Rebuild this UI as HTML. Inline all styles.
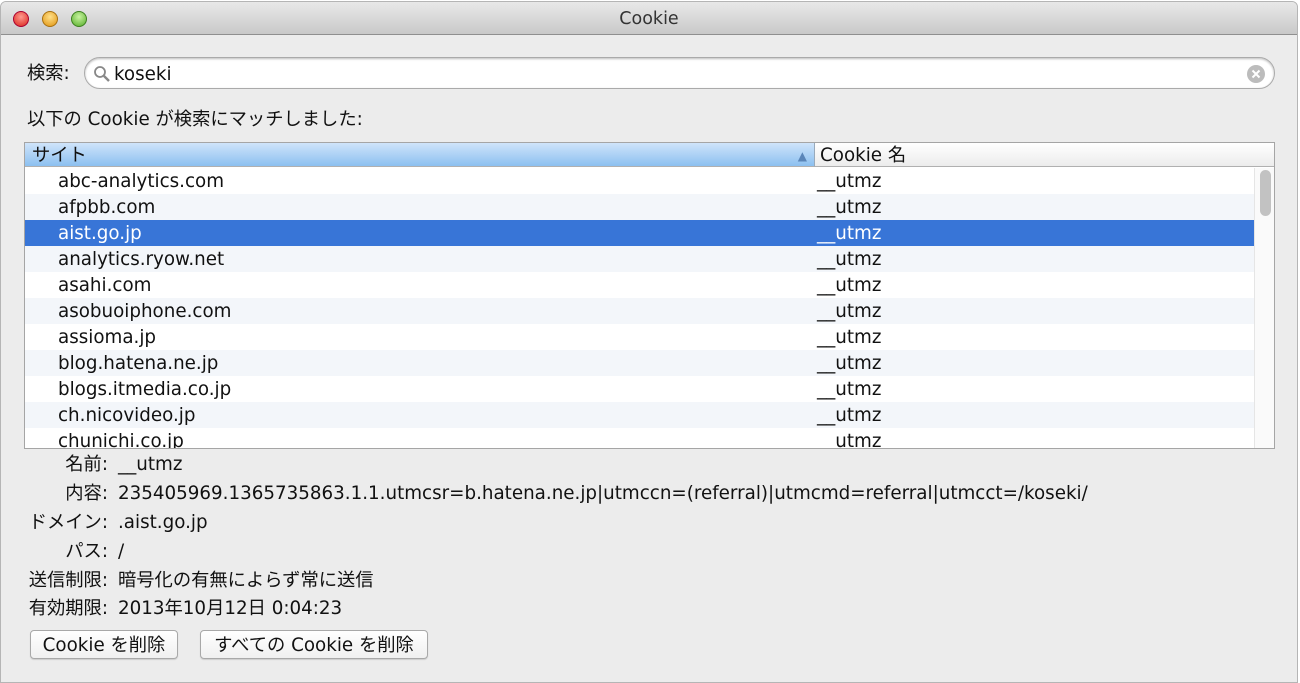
<!DOCTYPE html>
<html><head><meta charset="utf-8"><style>
*{margin:0;padding:0;box-sizing:border-box}
body{width:1300px;height:683px;background:#fff;font-family:"DejaVu Sans","Noto Sans CJK JP",sans-serif;font-size:18.3px;line-height:22px;color:#111;position:relative;overflow:hidden}
.win{position:absolute;left:0;top:1px;width:1298px;height:682px;background:#ececec;border:1px solid #b5b5b5;border-radius:6px 6px 0 0;overflow:hidden}
.tb{position:absolute;left:0;top:0;right:0;height:33px;background:linear-gradient(#e8e8e8,#c9c9c9);border-bottom:1px solid #8f8f8f;text-align:center;line-height:35px;font-size:17.5px;color:#333}
.dot{position:absolute;top:9px;width:16px;height:16px;border-radius:50%}
.a{position:absolute;white-space:nowrap}
.search{position:absolute;left:84px;top:57px;width:1191px;height:32px;background:#fff;border:1px solid #aaa;border-radius:16px;box-shadow:inset 0 1px 2px #bbb}
.table{position:absolute;left:24px;top:142px;width:1251px;height:307px;background:#fff;border:1px solid #a5a5a5;overflow:hidden}
.hd{position:absolute;top:0;height:24px;line-height:26px;border-bottom:1px solid #b0b0b0}
.row{position:absolute;left:0;width:1229px;height:26px;line-height:28px}
.row span{position:absolute}
.btn{position:absolute;top:630px;height:29px;background:linear-gradient(#fff,#f0f0f0);border:1px solid #a8a8a8;border-radius:4px;line-height:29px;text-align:center;box-shadow:0 1px 1px #ccc}
</style></head><body>
<div class="win">
<div class="tb">Cookie
<div class="dot" style="left:12px;background:radial-gradient(circle at 50% 35%,#ff9a90,#d9241a);border:1px solid #a03"></div>
<div class="dot" style="left:41px;background:radial-gradient(circle at 50% 35%,#ffe08a,#e0940f);border:1px solid #a87010"></div>
<div class="dot" style="left:70px;background:radial-gradient(circle at 50% 35%,#c8f3a0,#55ad28);border:1px solid #3d8020"></div>
</div>
</div>
<div class="a" style="left:27px;top:63px">検索:</div>
<div class="search">
<svg style="position:absolute;left:8px;top:7px" width="18" height="18"><circle cx="7" cy="7" r="5" fill="none" stroke="#888" stroke-width="1.8"/><line x1="11" y1="11" x2="16" y2="16" stroke="#888" stroke-width="2.4"/></svg>
<div class="a" style="left:29px;top:6px">koseki</div>
<svg style="position:absolute;right:8px;top:6px" width="20" height="20"><circle cx="10" cy="10" r="9" fill="#bcbcbc"/><path d="M6.5 6.5L13.5 13.5M13.5 6.5L6.5 13.5" stroke="#fff" stroke-width="2"/></svg>
</div>
<div class="a" style="left:27px;top:109px">以下の Cookie が検索にマッチしました:</div>
<div class="table">
<div class="hd" style="left:0;width:790px;background:linear-gradient(#cfe4fa,#8cc0f0);border-right:1px solid #9ab"><span style="position:absolute;left:7px">サイト</span><span style="position:absolute;right:7px;top:0;font-size:12px;color:#5a85b8">▲</span></div>
<div class="hd" style="left:790px;width:461px;background:linear-gradient(#fff,#ececec)"><span style="position:absolute;left:5px">Cookie 名</span></div>
<div style="position:absolute;left:1229px;top:25px;width:22px;height:282px;background:#fafafa;border-left:1px solid #e5e5e5"><div style="position:absolute;left:5px;top:2px;width:11px;height:46px;border-radius:6px;background:#c2c2c2"></div></div>
<div class="row" style="top:25px"><span style="left:33px">abc-analytics.com</span><span style="left:792px">__utmz</span></div>
<div class="row" style="top:51px;background:#f3f6fa"><span style="left:33px">afpbb.com</span><span style="left:792px">__utmz</span></div>
<div class="row" style="top:77px;background:#3875d7;color:#fff"><span style="left:33px">aist.go.jp</span><span style="left:792px">__utmz</span></div>
<div class="row" style="top:103px;background:#f3f6fa"><span style="left:33px">analytics.ryow.net</span><span style="left:792px">__utmz</span></div>
<div class="row" style="top:129px"><span style="left:33px">asahi.com</span><span style="left:792px">__utmz</span></div>
<div class="row" style="top:155px;background:#f3f6fa"><span style="left:33px">asobuoiphone.com</span><span style="left:792px">__utmz</span></div>
<div class="row" style="top:181px"><span style="left:33px">assioma.jp</span><span style="left:792px">__utmz</span></div>
<div class="row" style="top:207px;background:#f3f6fa"><span style="left:33px">blog.hatena.ne.jp</span><span style="left:792px">__utmz</span></div>
<div class="row" style="top:233px"><span style="left:33px">blogs.itmedia.co.jp</span><span style="left:792px">__utmz</span></div>
<div class="row" style="top:259px;background:#f3f6fa"><span style="left:33px">ch.nicovideo.jp</span><span style="left:792px">__utmz</span></div>
<div class="row" style="top:285px"><span style="left:33px">chunichi.co.jp</span><span style="left:792px">__utmz</span></div>
</div>
<div class="a" style="right:1192px;top:454px">名前:</div><div class="a" style="left:118px;top:454px">__utmz</div>
<div class="a" style="right:1192px;top:483px">内容:</div><div class="a" style="left:118px;top:483px">235405969.1365735863.1.1.utmcsr=b.hatena.ne.jp|utmccn=(referral)|utmcmd=referral|utmcct=/koseki/</div>
<div class="a" style="right:1192px;top:512px">ドメイン:</div><div class="a" style="left:118px;top:512px">.aist.go.jp</div>
<div class="a" style="right:1192px;top:541px">パス:</div><div class="a" style="left:118px;top:541px">/</div>
<div class="a" style="right:1192px;top:570px">送信制限:</div><div class="a" style="left:118px;top:570px">暗号化の有無によらず常に送信</div>
<div class="a" style="right:1192px;top:598px">有効期限:</div><div class="a" style="left:118px;top:598px">2013年10月12日 0:04:23</div>
<div class="btn" style="left:30px;width:148px">Cookie を削除</div>
<div class="btn" style="left:200px;width:228px">すべての Cookie を削除</div>
</body></html>
